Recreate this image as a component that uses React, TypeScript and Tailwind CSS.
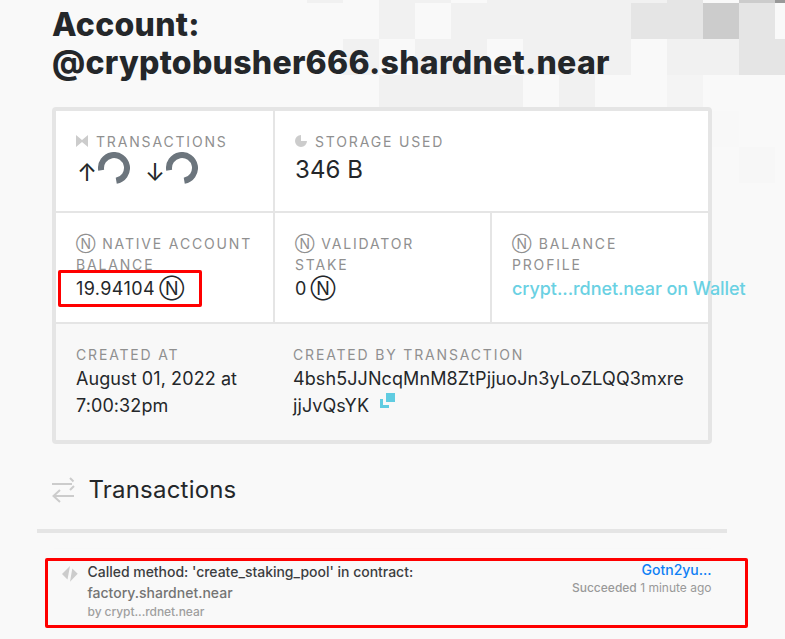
import type { ReactNode } from "react";

type Cell = [x: number, y: number, width: number, fill: string];

// Mosaic background: rows of 36px squares behind the page header.
const cells: Cell[] = [
  [307, -33, 36, "#f1f1f1"],
  [379, -33, 72, "#f1f1f1"],
  [487, -33, 180, "#f1f1f1"],
  [667, -33, 36, "#e5e5e5"],
  [739, -33, 36, "#cccccc"],
  [775, -33, 36, "#999999"],
  [379, 3, 36, "#f1f1f1"],
  [451, 3, 180, "#f1f1f1"],
  [631, 3, 72, "#e5e5e5"],
  [703, 3, 36, "#cccccc"],
  [739, 3, 36, "#e5e5e5"],
  [343, 39, 36, "#f1f1f1"],
  [415, 39, 72, "#f1f1f1"],
  [523, 39, 108, "#f1f1f1"],
  [667, 39, 72, "#f1f1f1"],
  [739, 39, 46, "#e5e5e5"],
  [379, 75, 144, "#f1f1f1"],
  [559, 75, 36, "#f1f1f1"],
  [667, 75, 36, "#f4f4f4"],
  [703, 111, 36, "#f8f8f8"],
  [739, 147, 36, "#f7f7f7"],
];

function Mosaic() {
  return (
    <svg className="absolute inset-0 -z-10" width="785" height="190" shapeRendering="crispEdges">
      {cells.map(([x, y, w, fill]) => (
        <rect key={`${x}-${y}`} x={x} y={y} width={w} height="36" fill={fill} />
      ))}
    </svg>
  );
}

function Label({ children }: { children: ReactNode }) {
  return (
    <div className="text-[14px] leading-[21px] tracking-[1.83px] text-[#909090]">{children}</div>
  );
}

function Near({ className }: { className: string }) {
  return <span className={className}>Ⓝ</span>;
}

function Spinner() {
  return (
    <svg width="32" height="32" viewBox="0 0 32 32" fill="none">
      <path d="M3.2 18.26A13 13 0 1 1 18.26 28.8" stroke="#6c757d" strokeWidth="6" />
    </svg>
  );
}

function Stats() {
  return (
    <section className="mt-[24.5px] ml-[52px] h-[337px] w-[660px] rounded-[4px] border-4 border-[#e5e5e5] bg-[#f8f8f8] text-[18px] leading-[27px] tracking-[0.09px]">
      <div className="flex h-[102px] border-b-2 border-[#e5e5e5] bg-white">
        <div className="w-[219px] border-r-2 border-[#e5e5e5] pt-5 pl-5">
          <Label>
            <svg className="mr-2 inline-block align-[0px]" width="12" height="12" fill="#ccc">
              <path d="M0 0L6 5V7L0 12ZM12 0L6 5V7L12 12Z" />
            </svg>
            TRANSACTIONS
          </Label>
          <div className="flex text-[24px] leading-8">
            <span className="w-[22px] pt-[5px] pl-px">↑</span>
            <Spinner />
            <span className="ml-[14px] w-[22px] pt-[5px] pl-px">↓</span>
            <Spinner />
          </div>
        </div>
        <div className="pt-5 pl-5">
          <Label>
            <svg className="mr-2 inline-block align-[0px]" width="12" height="12" fill="#ccc">
              <path d="M6 0A6 6 0 1 0 12 6H6Z" />
            </svg>
            STORAGE USED
          </Label>
          <div className="text-[24px] leading-[36px]">346 B</div>
        </div>
      </div>
      <div className="flex h-[111px] border-b-2 border-[#e5e5e5] bg-white">
        <div className="w-[219px] border-r-2 border-[#e5e5e5] pt-5 pl-5">
          <Label>
            <Near className="mr-px tracking-normal" /> NATIVE ACCOUNT
            <br />
            BALANCE
          </Label>
          <div>
            <span className="tracking-[0.4px]">19.94104</span> <Near className="-ml-px" />
          </div>
        </div>
        <div className="w-[217px] border-r-2 border-[#e5e5e5] pt-5 pl-5">
          <Label>
            <Near className="mr-px tracking-normal" /> VALIDATOR
            <br />
            STAKE
          </Label>
          <div>
            0 <Near className="-ml-px" />
          </div>
        </div>
        <div className="w-[216px] pt-5 pl-5">
          <Label>
            <Near className="mr-[1.5px] tracking-normal" /> BALANCE
            <br />
            PROFILE
          </Label>
          <div className="font-medium tracking-[-0.07px] whitespace-nowrap text-[#6ad1e3]">crypt...rdnet.near on Wallet</div>
        </div>
      </div>
      <div className="flex pt-5 pl-5">
        <div className="w-[217px]">
          <Label>CREATED AT</Label>
          <div>
            August 01, 2022 at
            <br />
            7:00:32pm
          </div>
        </div>
        <div>
          <Label>CREATED BY TRANSACTION</Label>
          <div>
            4bsh5JJNcqMnM8ZtPjjuoJn3yLoZLQQ3mxre
            <br />
            jjJvQsYK
            <svg className="ml-[11px] inline-block align-[4px]" width="15" height="15" fill="#60cce1" shapeRendering="crispEdges">
              <path d="M6 0H15V9H6ZM0 6H3V12H9V15H0Z" />
            </svg>
          </div>
        </div>
      </div>
    </section>
  );
}

export default function App() {
  return (
    <main className="relative isolate h-[639px] w-[785px] overflow-hidden bg-[#f9f9f9] font-['Inter',sans-serif] text-[#24272a]">
      <Mosaic />
      <h1 className="ml-[52px] pt-[6px] text-[32px] leading-[38.4px] font-extrabold tracking-[0.27px]">
        Account:
        <br />
        @cryptobusher666.shardnet.near
      </h1>
      <Stats />
      <h2 className="mt-[28px] ml-[52px] flex h-9 items-center text-[24px] leading-9 tracking-[0.2px]">
        <svg className="mr-[13.5px]" width="23" height="26" viewBox="0 0 23 26" fill="none" stroke="#ccc" strokeWidth="2">
          <path d="M0 7H20M18 1L21.5 4.5M22 9L18 13M2 19H22M8 13L1.5 19L8 25" />
        </svg>
        Transactions
      </h2>
      <div className="mt-[21px] ml-[37px] h-1 w-[690px] bg-[#e5e5e5]" />
      <div className="mt-[15px] ml-[54px] h-px w-[657px] bg-[#f8f8f8]" />
      <article className="mt-[12px] ml-[62px] flex w-[649.5px]">
        <svg className="mt-[5px] mr-[9.5px]" width="16" height="16" fill="#ccc">
          <path d="M0 8L8 0L5.5 13.5ZM10.3 2.5L15.7 7.8L8 15.7Z" />
        </svg>
        <div className="text-[14px] leading-[21px] font-medium">
          <div className="tracking-[-0.02px] text-[#3c3e41]">Called method: 'create_staking_pool' in contract:</div>
          <div className="text-[#747474]">factory.shardnet.near</div>
          <div className="text-[12px] leading-[18px] tracking-[-0.06px] text-[#9f9f9f]">by crypt...rdnet.near</div>
        </div>
        <div className="ml-auto text-right">
          <div className="text-[14px] leading-[18px] font-medium text-[#0f80f5]">Gotn2yu...</div>
          <div className="text-[12px] leading-[18px] text-[#999]">
            <span className="font-medium">Succeeded</span> 1 minute ago
          </div>
        </div>
      </article>
      <div className="absolute top-[270px] left-[58px] h-[37px] w-[144px] rounded-[2px] border-3 border-[#f00]" />
      <div className="absolute top-[558px] left-[45px] h-[70px] w-[703px] rounded-[2px] border-3 border-[#f00]" />
    </main>
  );
}
